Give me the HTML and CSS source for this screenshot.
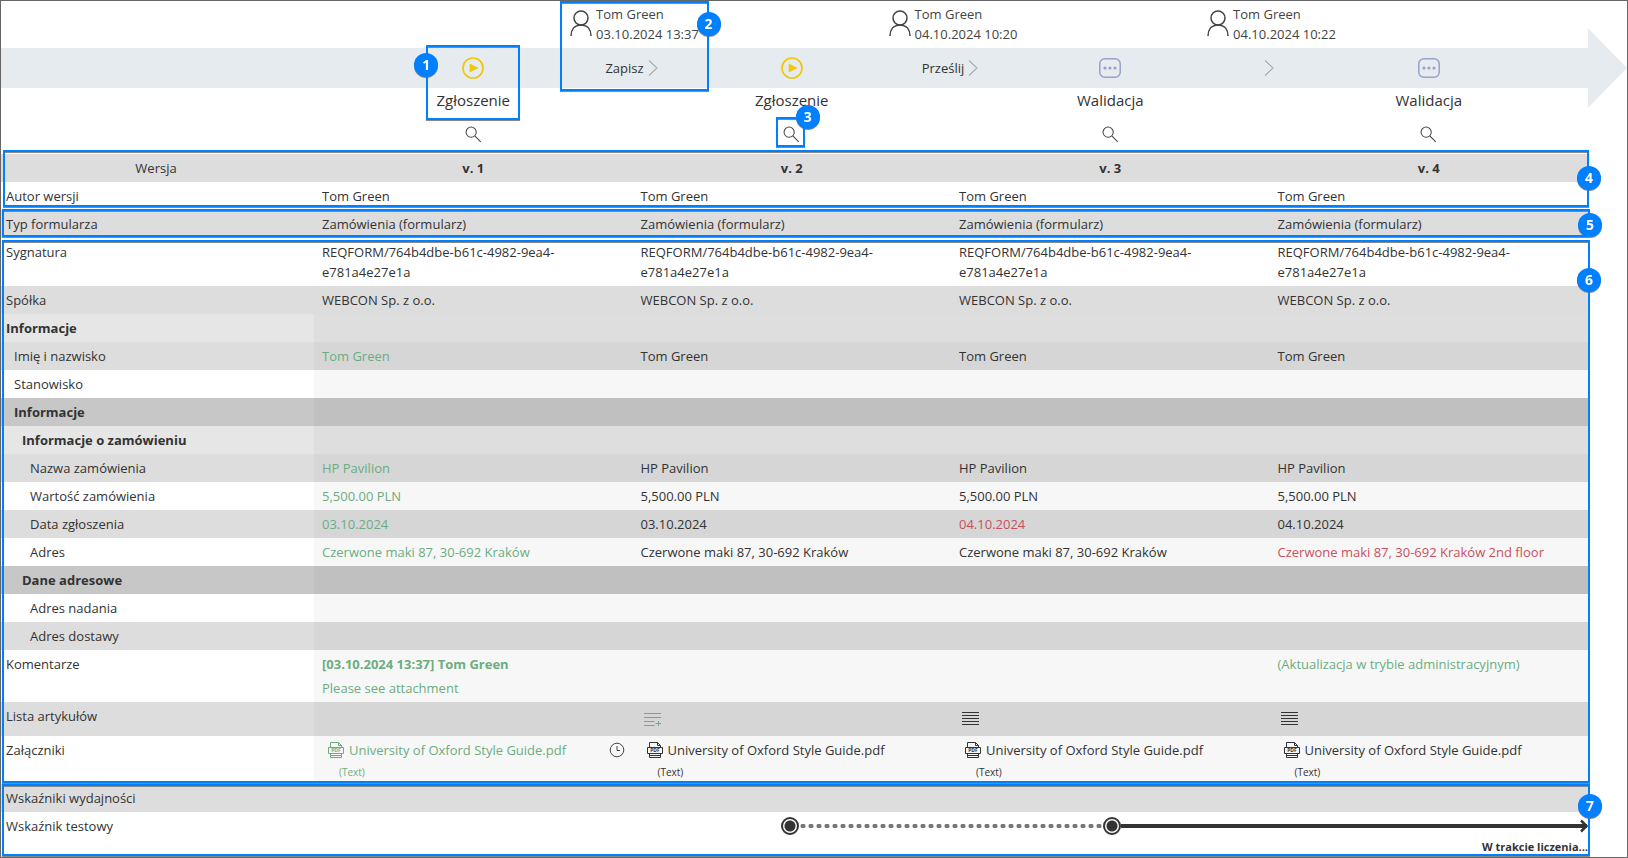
FILE: index.html
```html
<!DOCTYPE html>
<html lang="pl">
<head>
<meta charset="utf-8">
<title>Historia elementu</title>
<link rel="stylesheet" href="styles.css">
</head>
<body>
<svg class="sprite" aria-hidden="true">
  <symbol id="i-user" viewBox="0 0 22 26"><g fill="none" stroke="currentColor" stroke-width="1.5"><circle cx="11" cy="8" r="7"/><path d="M1 26c0-6 3-11 10-11s10 5 10 11"/></g></symbol>
  <symbol id="i-play" viewBox="0 0 22 22"><circle cx="11" cy="11" r="10" fill="none" stroke="currentColor" stroke-width="1.7"/><path d="M8 7l8 4-8 4z" fill="currentColor" stroke="currentColor" stroke-width=".6"/></symbol>
  <symbol id="i-dots" viewBox="0 0 22 22"><rect x=".8" y="1.8" width="20.4" height="18.4" rx="5" fill="none" stroke="currentColor" stroke-width="1.5"/><g fill="currentColor"><circle cx="6" cy="11" r="1.6"/><circle cx="11" cy="11" r="1.6"/><circle cx="16" cy="11" r="1.6"/></g></symbol>
  <symbol id="i-chevron" viewBox="0 0 10 16"><path d="M1 .5L9 8l-8 7.5" fill="none" stroke="currentColor" stroke-width="1.1"/></symbol>
  <symbol id="i-search" viewBox="0 0 18 18"><g fill="none" stroke="currentColor" stroke-width="1.1"><circle cx="6.5" cy="6.5" r="5.4"/><path d="M10.4 10.4l6.3 6.3"/></g></symbol>
  <symbol id="i-pdf" viewBox="0 0 16 16"><path d="M2.5 5V.5h8L13.500 3.500V5M10.500.5v3h3M.5 5.500h15v6H.5zM2.500 11.500v4h11v-4M2.500 13.500h11" fill="none" stroke="currentColor"/><text x="8" y="10.300" text-anchor="middle" class="pdf-text">PDF</text></symbol>
  <symbol id="i-clock" viewBox="0 0 16 16"><g fill="none" stroke="currentColor" stroke-width="1"><circle cx="8" cy="8" r="6.800"/><path d="M8 4v4.500h3"/></g></symbol>
  <symbol id="i-list" viewBox="0 0 17 16"><path d="M0 1.500h17M0 4.500h17M0 7.500h17M0 10.500h17M0 13.500h17" stroke="currentColor"/></symbol>
  <symbol id="i-list-add" viewBox="0 0 17 16"><path d="M0 1.500h17M0 5.500h17M0 9.500h10.500M0 13.500h10.500M11.500 11.500h5.500M14.500 9v5" stroke="currentColor" fill="none"/></symbol>
</svg>
<main class="page">
  <section class="path">
    <div class="band"></div>
    <div class="person t1"><svg class="i-user"><use href="#i-user"/></svg><div>Tom Green<br>03.10.2024 13:37</div></div>
    <div class="person t2"><svg class="i-user"><use href="#i-user"/></svg><div>Tom Green<br>04.10.2024 10:20</div></div>
    <div class="person t3"><svg class="i-user"><use href="#i-user"/></svg><div>Tom Green<br>04.10.2024 10:22</div></div>
    <div class="move t1">Zapisz<svg class="i-chevron"><use href="#i-chevron"/></svg></div>
    <div class="move t2">Prześlij<svg class="i-chevron"><use href="#i-chevron"/></svg></div>
    <div class="move t3"><svg class="i-chevron"><use href="#i-chevron"/></svg></div>
    <div class="step s1"><svg class="i-step play"><use href="#i-play"/></svg><span class="step-name">Zgłoszenie</span><button class="look" aria-label="Podgląd v. 1"><svg><use href="#i-search"/></svg></button></div>
    <div class="step s2"><svg class="i-step play"><use href="#i-play"/></svg><span class="step-name">Zgłoszenie</span><button class="look" aria-label="Podgląd v. 2"><svg><use href="#i-search"/></svg></button></div>
    <div class="step s3"><svg class="i-step dots"><use href="#i-dots"/></svg><span class="step-name">Walidacja</span><button class="look" aria-label="Podgląd v. 3"><svg><use href="#i-search"/></svg></button></div>
    <div class="step s4"><svg class="i-step dots"><use href="#i-dots"/></svg><span class="step-name">Walidacja</span><button class="look" aria-label="Podgląd v. 4"><svg><use href="#i-search"/></svg></button></div>
  </section>
  <table class="history">
    <colgroup><col class="label-col"><col><col><col><col></colgroup>
    <thead>
      <tr class="odd"><th class="version-label">Wersja</th><th>v. 1</th><th>v. 2</th><th>v. 3</th><th>v. 4</th></tr>
    </thead>
    <tbody>
      <tr><td>Autor wersji</td><td>Tom Green</td><td>Tom Green</td><td>Tom Green</td><td>Tom Green</td></tr>
      <tr class="odd"><td>Typ formularza</td><td>Zamówienia (formularz)</td><td>Zamówienia (formularz)</td><td>Zamówienia (formularz)</td><td>Zamówienia (formularz)</td></tr>
      <tr><td>Sygnatura</td><td>REQFORM/764b4dbe-b61c-4982-9ea4-<br>e781a4e27e1a</td><td>REQFORM/764b4dbe-b61c-4982-9ea4-<br>e781a4e27e1a</td><td>REQFORM/764b4dbe-b61c-4982-9ea4-<br>e781a4e27e1a</td><td>REQFORM/764b4dbe-b61c-4982-9ea4-<br>e781a4e27e1a</td></tr>
      <tr class="odd"><td>Spółka</td><td>WEBCON Sp. z o.o.</td><td>WEBCON Sp. z o.o.</td><td>WEBCON Sp. z o.o.</td><td>WEBCON Sp. z o.o.</td></tr>
    </tbody>
    <tbody class="fields">
      <tr class="group"><td>Informacje</td><td></td><td></td><td></td><td></td></tr>
      <tr class="odd l1"><td>Imię i nazwisko</td><td class="new">Tom Green</td><td>Tom Green</td><td>Tom Green</td><td>Tom Green</td></tr>
      <tr class="l1"><td>Stanowisko</td><td></td><td></td><td></td><td></td></tr>
      <tr class="tab l1"><td>Informacje</td><td></td><td></td><td></td><td></td></tr>
      <tr class="group l2"><td>Informacje o zamówieniu</td><td></td><td></td><td></td><td></td></tr>
      <tr class="odd l3"><td>Nazwa zamówienia</td><td class="new">HP Pavilion</td><td>HP Pavilion</td><td>HP Pavilion</td><td>HP Pavilion</td></tr>
      <tr class="l3"><td>Wartość zamówienia</td><td class="new">5,500.00 PLN</td><td>5,500.00 PLN</td><td>5,500.00 PLN</td><td>5,500.00 PLN</td></tr>
      <tr class="odd l3"><td>Data zgłoszenia</td><td class="new">03.10.2024</td><td>03.10.2024</td><td class="changed">04.10.2024</td><td>04.10.2024</td></tr>
      <tr class="l3"><td>Adres</td><td class="new">Czerwone maki 87, 30-692 Kraków</td><td>Czerwone maki 87, 30-692 Kraków</td><td>Czerwone maki 87, 30-692 Kraków</td><td class="changed">Czerwone maki 87, 30-692 Kraków 2nd floor</td></tr>
      <tr class="tab l2"><td>Dane adresowe</td><td></td><td></td><td></td><td></td></tr>
      <tr class="l3"><td>Adres nadania</td><td></td><td></td><td></td><td></td></tr>
      <tr class="odd l3"><td>Adres dostawy</td><td></td><td></td><td></td><td></td></tr>
      <tr><td>Komentarze</td><td class="new"><b class="comment-head">[03.10.2024 13:37] Tom Green</b><span class="comment">Please see attachment</span></td><td></td><td></td><td class="new">(Aktualizacja w trybie administracyjnym)</td></tr>
      <tr class="odd"><td>Lista artykułów</td><td></td><td class="new"><svg class="i-list add"><use href="#i-list-add"/></svg></td><td><svg class="i-list"><use href="#i-list"/></svg></td><td><svg class="i-list"><use href="#i-list"/></svg></td></tr>
      <tr><td>Załączniki</td>
        <td class="new"><div class="file"><svg class="i-16"><use href="#i-pdf"/></svg><a href="#">University of Oxford Style Guide.pdf</a><svg class="i-16 clock"><use href="#i-clock"/></svg></div><small>(Text)</small></td>
        <td><div class="file"><svg class="i-16"><use href="#i-pdf"/></svg><a href="#">University of Oxford Style Guide.pdf</a></div><small>(Text)</small></td>
        <td><div class="file"><svg class="i-16"><use href="#i-pdf"/></svg><a href="#">University of Oxford Style Guide.pdf</a></div><small>(Text)</small></td>
        <td><div class="file"><svg class="i-16"><use href="#i-pdf"/></svg><a href="#">University of Oxford Style Guide.pdf</a></div><small>(Text)</small></td></tr>
    </tbody>
    <tbody>
      <tr class="odd"><td>Wskaźniki wydajności</td><td></td><td></td><td></td><td></td></tr>
      <tr><td>Wskaźnik testowy</td><td colspan="4" class="kpi">
        <div class="kpi-line"><span class="dot"></span><span class="dotted"></span><span class="dot"></span><span class="solid"></span><svg class="tip" viewBox="0 0 8 14"><path d="M1 1.500L6.500 7 1 12.500" fill="none" stroke="currentColor" stroke-width="2.500"/></svg></div>
        <div class="kpi-note">W trakcie liczenia...</div></td></tr>
    </tbody>
  </table>
  <div class="mark m1"><span class="badge left">1</span></div>
  <div class="mark m2"><span class="badge">2</span></div>
  <div class="mark m3"><span class="badge">3</span></div>
  <div class="mark m4"><span class="badge">4</span></div>
  <div class="mark m5"><span class="badge">5</span></div>
  <div class="mark m6"><span class="badge">6</span></div>
  <div class="mark m7"><span class="badge">7</span></div>
</main>
</body>
</html>
```
FILE: styles.css
```css
* { box-sizing: border-box; }
body {
  margin: 0;
  background: #fff;
  color: #333;
  font: 13px/20px "Segoe UI", "Open Sans", "Noto Sans", sans-serif;
}
.sprite { display: none; }
svg { display: block; flex: none; }
a { color: inherit; text-decoration: none; }

.page {
  --half: calc((100% - 352px) / 8);
  position: relative;
  min-height: 100vh;
  border: 1px solid #666;
}

/* Workflow path */
.path {
  display: grid;
  grid-template-columns: 313px repeat(8, 1fr);
  grid-template-rows: 47px 40px 66px;
  margin-right: 39px;
}
.band { position: relative; grid-area: 2 / 1 / 3 / -1; background: #e6ebef; }
.band::after {
  content: "";
  position: absolute;
  left: 100%;
  top: -20px;
  width: 39px;
  height: 80px;
  background: #e6ebef;
  clip-path: polygon(0 0, 100% 50%, 0 100%);
}
.t1 { grid-column: 3 / span 2; }
.t2 { grid-column: 5 / span 2; }
.t3 { grid-column: 7 / span 2; }
.s1 { grid-column: 2 / span 2; }
.s2 { grid-column: 4 / span 2; }
.s3 { grid-column: 6 / span 2; }
.s4 { grid-column: 8 / span 2; }
.person {
  grid-row: 1;
  display: flex;
  justify-content: center;
  gap: 4px;
  padding: 3px 0 0 4px;
  color: #444;
}
.i-user { width: 22px; height: 26px; margin-top: 6px; }
.move {
  grid-row: 2;
  position: relative;
  display: flex;
  justify-content: center;
  align-items: center;
  gap: 4px;
  padding-right: 2px;
}
.i-chevron { width: 10px; height: 16px; color: #aaa; }
.step {
  grid-row: 2 / span 2;
  position: relative;
  display: flex;
  flex-direction: column;
  align-items: center;
}
.i-step { width: 22px; height: 22px; margin: 9px 0; }
.play { color: #f0c808; }
.dots { color: #98a1c8; }
.step-name { font-size: 15px; line-height: 24px; }
.look {
  margin: 9px 0 0;
  padding: 5px;
  border: 0;
  background: none;
  color: #444;
}
.look svg { width: 17px; height: 17px; }

/* Version table */
.history {
  width: calc(100% - 39px);
  table-layout: fixed;
  border-collapse: collapse;
}
.label-col { width: 313px; }
.history td, .history th { padding: 4px 0 4px 8px; vertical-align: top; text-align: left; }
.history tr { height: 28px; }
.history td:first-child { padding-left: 5px; }
.history thead th { padding: 4px 0; text-align: center; }
.history .version-label { padding-right: 3px; font-weight: 400; }
.history tr > * { white-space: nowrap; }
.odd { background: #ddd; }
.group { background: #e6e6e6; font-weight: 700; }
.tab { background: #c7c7c7; font-weight: 700; }
.fields td + td { background: rgba(0, 0, 0, .033); }
.history .l1 td:first-child { padding-left: 13px; }
.history .l2 td:first-child { padding-left: 21px; }
.history .l3 td:first-child { padding-left: 29px; }
.new { color: #6cad7f; }
.changed { color: #c9505c; }
.comment-head, .comment { display: block; }
.comment-head { margin-bottom: 4px; }
.i-list { width: 17px; height: 16px; margin: 5px 0 5px 3px; }
.i-list.add { margin: 6px 0 4px 3px; }
.file { display: flex; align-items: center; gap: 5px; padding-left: 6px; }
.i-16 { width: 16px; height: 16px; }
.pdf-text { font: 700 5px "Open Sans", sans-serif; fill: currentColor; }
.clock { margin: 0 8px 0 auto; color: #444; }
.history small {
  display: block;
  padding: 4px 0 0 17px;
  font-size: 10px;
  line-height: 16px;
}

/* Indicator line */
.history .kpi { padding: 5px 0 0; }
.kpi-line { display: flex; align-items: center; height: 18px; color: #333; }
.dot {
  flex: none;
  width: 18px;
  height: 18px;
  border: 2px solid #333;
  border-radius: 50%;
  background: radial-gradient(circle, #333 5px, #fff 6px);
}
.dot:first-child { margin-left: calc(37.5% - 11px); }
.dotted {
  width: calc(25% - 14px);
  height: 4px;
  background: radial-gradient(circle, #777 2px, transparent 3px) 0 0 / 8px 4px repeat-x;
}
.solid { flex: 1; height: 4px; background: #333; }
.tip { width: 8px; height: 14px; margin-left: -7px; }
.kpi-note {
  padding-top: 4px;
  text-align: right;
  font-size: 11px;
  font-weight: 700;
  line-height: 16px;
}

/* Numbered callouts */
.mark {
  position: absolute;
  border: 2px solid #0080ff;
  filter: drop-shadow(0 1px 0 #888);
  pointer-events: none;
}
.badge {
  position: absolute;
  right: -14px;
  width: 24px;
  height: 24px;
  border-radius: 50%;
  background: #0080ff;
  color: #fff;
  font: 700 14px/24px "Open Sans", sans-serif;
  text-align: center;
}
.badge.left { left: -14px; }
.m1 { left: calc(313px + var(--half) - 47px); top: 44px; width: 94px; height: 75px; }
.m1 .badge { top: 6px; }
.m2 { left: calc(313px + var(--half) * 2 - 73px); top: 0; width: 149px; height: 90px; }
.m2 .badge { top: 9px; }
.m3 { left: calc(313px + var(--half) * 3 - 16px); top: 116px; width: 29px; height: 30px; }
.m3 .badge { right: -17px; top: -14px; }
.m4 { left: 2px; right: 38px; top: 149px; height: 57px; }
.m4 .badge { top: 14px; }
.m5 { left: 1px; right: 37px; top: 208px; height: 28px; }
.m5 .badge { top: 2px; }
.m6 { left: 1px; right: 37px; top: 239px; height: 543px; }
.m6 .badge { right: -13px; top: 26px; }
.m7 { left: 1px; right: 37px; top: 783px; bottom: 1px; }
.m7 .badge { top: 8px; }
```
